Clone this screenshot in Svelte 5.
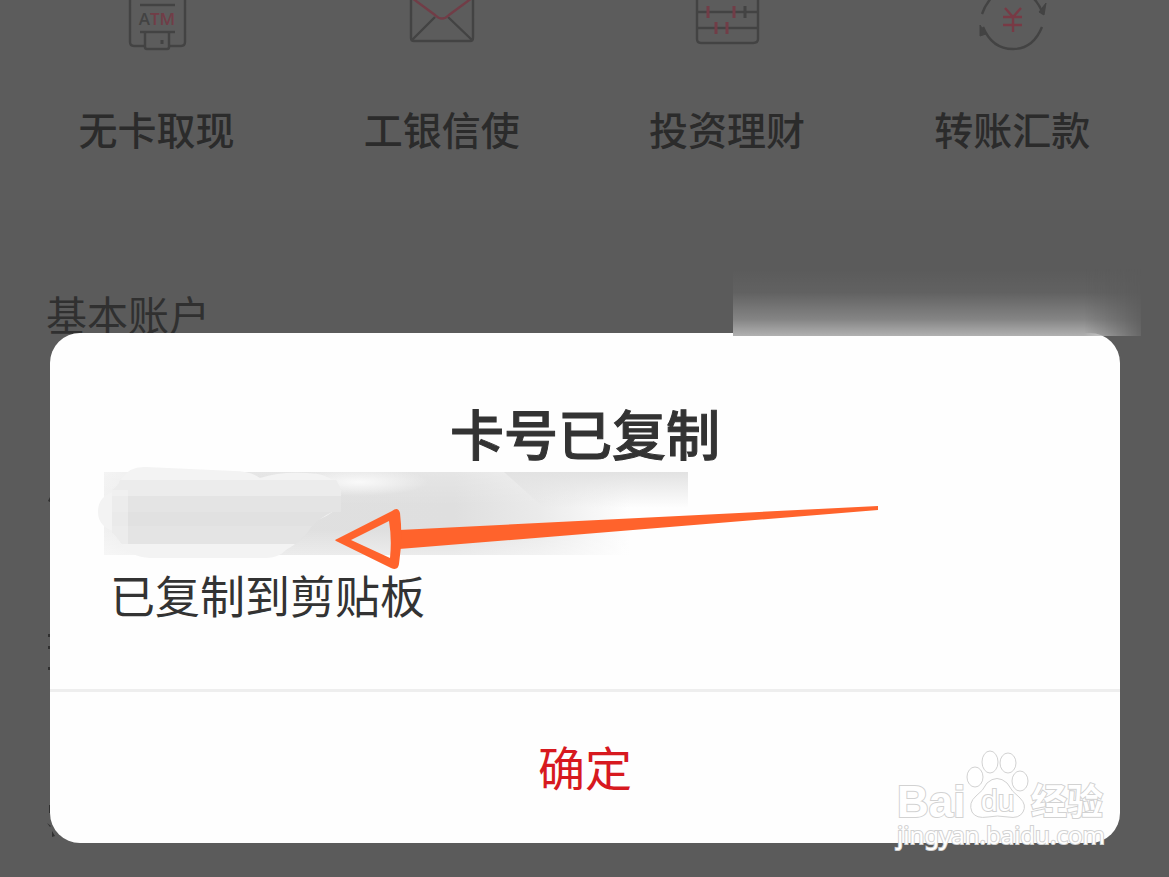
<script>
	let open = true
	const services = [
		{ id: 'atm', name: '无卡取现' },
		{ id: 'mail', name: '工银信使' },
		{ id: 'abacus', name: '投资理财' },
		{ id: 'transfer', name: '转账汇款' }
	]
	const close = () => {
		open = false
	}
</script>

<main>
	<nav class="services">
		{#each services as s}
			<a class="service" href="#{s.id}">
				<svg class="icon" width="72" height="52" viewBox="0 0 72 52" fill="none" stroke="#434343" stroke-width="2.4" aria-hidden="true">
					{#if s.id === 'atm'}
						<path d="M9 -6V42Q9 46 13 46H23M49 46H60Q64 46 64 42V-6M19 5H54M19 32H54" />
						<path d="M24 32V47Q24 49 26 49H46Q48 49 48 47V32" />
						<path d="M41 40V44" stroke-width="3" />
						<text x="36" y="25" text-anchor="middle" class="atm"><tspan>A</tspan><tspan class="red">TM</tspan></text>
					{:else if s.id === 'mail'}
						<path d="M5 -4V38Q5 41 8 41H64Q67 41 67 38V-4M6 40L29 17M66 40L42 17" />
						<path d="M6 -2L29 15Q36 22 43 15L66 -2" stroke="#713d47" />
					{:else if s.id === 'abacus'}
						<path d="M6 -6V39Q6 43 10 43H62Q67 43 67 39V-6M6 12H66M6 28H66" />
						<path d="M17 6V18M43 6V18M25 22V34M36 22V34" stroke="#713d47" stroke-width="3" />
						<path d="M54 6V18" stroke-width="3" />
					{:else}
						<path d="M6 14Q9 5 16 -3M56 -3Q63 3 67 14M7 27Q16 49 37 49Q57 49 66 27" />
						<path d="M4 25V36L10 34ZM70 3L68 15L63 12Z" fill="#434343" stroke-width="1" />
						<path d="M29 8L37 17L45 8M27 17H46M27 25H46M37 17V32" stroke="#783a45" />
					{/if}
				</svg>
				<span>{s.name}</span>
			</a>
		{/each}
	</nav>

	<section class="account">
		<h2>基本账户</h2>
	</section>
</main>

{#if open}
	<div class="overlay">
		<div class="dialog" role="dialog" aria-modal="true" aria-labelledby="title">
			<div class="strip"></div>
			<div class="body">
				<h1 id="title">卡号已复制</h1>
				<!-- masked card number -->
				<svg class="masked" width="584" height="83" viewBox="0 0 584 83" aria-hidden="true">
					<defs>
						<linearGradient id="across">
							<stop offset="0" stop-color="#f1f1f1" />
							<stop offset=".2" stop-color="#e0e0e0" />
							<stop offset=".6" stop-color="#dfdfdf" />
							<stop offset=".75" stop-color="#ebebeb" />
							<stop offset=".9" stop-color="#fefefe" />
						</linearGradient>
						<linearGradient id="top" x2="0" y2="1">
							<stop offset="0" stop-color="#e2e2e2" />
							<stop offset="1" stop-color="#e2e2e2" stop-opacity="0" />
						</linearGradient>
						<linearGradient id="light" x2="0" y2="1">
							<stop offset="0" stop-color="#fff" stop-opacity=".2" />
							<stop offset=".4" stop-color="#fff" stop-opacity="0" />
							<stop offset=".7" stop-color="#fff" stop-opacity="0" />
							<stop offset="1" stop-color="#fff" stop-opacity=".4" />
						</linearGradient>
						<radialGradient id="spot">
							<stop offset="0" stop-color="#fff" stop-opacity=".8" />
							<stop offset="1" stop-color="#fff" stop-opacity="0" />
						</radialGradient>
					</defs>
					<rect width="584" height="83" fill="url(#across)" />
					<rect width="584" height="83" fill="url(#light)" />
					<path d="M400 0H584V36H440Z" fill="url(#top)" />
					<ellipse cx="255" cy="10" rx="70" ry="14" fill="url(#spot)" />
					<path d="M18 6Q26 -6 42 -5L130 -1Q146 -1 156 6Q180 -2 214 2Q238 8 237 24Q238 40 208 50Q200 68 182 78Q174 86 162 86H46Q26 85 18 72L12 60Q-6 55 -6 40Q-6 24 10 20Z" fill="#f3f3f3" />
					<path d="M16 8H232Q238 16 237 24H8V18Q14 14 16 8Z" fill="#ececec" />
					<path d="M8 24H237V40H8Z" fill="#e4e4e4" />
					<path d="M8 40H228Q216 46 208 54H8Z" fill="#e1e1e1" />
					<path d="M8 54H208Q202 64 192 72H18Q12 64 8 60Z" fill="#e4e4e4" />
					<path d="M8 18H24V72H18L8 60Z" fill="#f3f3f3" opacity=".5" />
				</svg>
				<p>已复制到剪贴板</p>
			</div>
			<button on:click={close}>确定</button>
			<svg class="arrow" width="546" height="68" viewBox="0 0 546 68" aria-hidden="true">
				<path d="M65 26L544 2V6L65 45Z" fill="#ff632c" />
				<path fill-rule="evenodd" d="M1 36L58 7Q64 2 66 9Q69 34 65 60Q64 67 57 64L2 37ZM17 36L56 54Q58 35 55 17Z" fill="#ff632c" />
			</svg>
			<!-- rows behind the dialog that reach past its edges -->
			<svg class="specks" width="1074" height="344" viewBox="0 0 1074 344" fill="#303030" aria-hidden="true">
				<path d="M3 0V5L1 4ZM1 137H3V140H1ZM1 149H3V152H1ZM1 170H3V173H1ZM2 308H3V316H2ZM0 326L4 329L3 330ZM5 334L8 339L5 340Z" />
			</svg>
		</div>
	</div>
{/if}

<svg class="watermark" width="216" height="104" viewBox="0 0 216 104" aria-label="Baidu 经验">
	<g fill="#fff" stroke="#d2d2d2" stroke-width="1">
		<ellipse cx="82" cy="27" rx="8" ry="10" />
		<ellipse cx="97" cy="12" rx="8" ry="11" />
		<ellipse cx="115" cy="13" rx="8" ry="10" />
		<ellipse cx="127" cy="31" rx="8" ry="10" />
		<path d="M94 33Q104 24 114 33Q119 42 127 48Q134 55 130 62Q126 69 115 67Q104 65 95 67Q83 69 79 62Q75 53 83 46Q90 41 94 33Z" />
		<text x="4" y="67" class="bai">Bai</text>
		<text x="88" y="61" class="du">du</text>
		<text x="138" y="65" class="jy">经验</text>
		<text x="4" y="94" class="url">jingyan.baidu.com</text>
	</g>
</svg>

<style>
	:global(body) {
		margin: 0;
		background: #5b5b5b;
		font-family: "Noto Sans CJK SC", sans-serif;
	}
	main {
		min-height: 100vh;
	}
	.services {
		display: grid;
		grid-template-columns: repeat(4, 1fr);
		padding: 0 14px 52px;
		background: #5c5c5c;
	}
	.service {
		display: flex;
		flex-direction: column;
		align-items: center;
		gap: 46px;
		color: #2b2b2b;
		font-size: 39px;
		line-height: 60px;
		font-weight: 500;
		text-decoration: none;
	}
	.icon {
		display: block;
	}
	.atm {
		fill: #434343;
		stroke: none;
		font: 600 17px "Open Sans", sans-serif;
	}
	.red {
		fill: #713d47;
	}
	.account {
		padding: 73px 46px 0;
	}
	h2 {
		margin: 0;
		color: #303030;
		font-size: 41px;
		line-height: 60px;
		font-weight: 400;
	}
	.overlay {
		position: absolute;
		inset: 0;
		display: flex;
		align-items: flex-end;
		padding: 0 49px 34px 50px;
	}
	.dialog {
		position: relative;
		flex: 1;
		background: #fefefe;
		border-radius: 30px;
	}
	/* smudge above the top right corner */
	.strip {
		position: absolute;
		top: -64px;
		right: -21px;
		width: 408px;
		height: 67px;
		background: linear-gradient(transparent, rgba(255, 255, 255, 0.04) 35%, rgba(255, 255, 255, 0.25) 75%, rgba(255, 255, 255, 0.52)), #5b5b5b;
		-webkit-mask-image: linear-gradient(to right, black 86%, rgba(0, 0, 0, 0.15));
		mask-image: linear-gradient(to right, black 86%, rgba(0, 0, 0, 0.15));
	}
	.body {
		padding: 65px 54px 64px;
		border-bottom: 3px solid #eee;
	}
	h1 {
		margin: 0 0 4px;
		color: #333;
		font-size: 54px;
		line-height: 70px;
		font-weight: 500;
		text-align: center;
		-webkit-text-stroke: 1px #333;
	}
	.masked {
		display: block;
		overflow: visible;
	}
	p {
		margin: 10px 0 0 6px;
		color: #333;
		font-size: 45px;
		line-height: 60px;
	}
	button {
		display: block;
		width: 100%;
		height: 151px;
		padding: 0 0 4px;
		border: 0;
		background: none;
		color: #d7191f;
		font-family: inherit;
		font-size: 47px;
	}
	.arrow {
		position: absolute;
		top: 171px;
		left: 284px;
	}
	.specks {
		position: absolute;
		left: -3px;
		bottom: 2px;
	}
	.watermark {
		position: absolute;
		right: 60px;
		bottom: 23px;
	}
	.watermark text {
		paint-order: stroke;
		stroke-width: 2px;
	}
	.bai {
		font: 700 44px "Liberation Sans", sans-serif;
	}
	.du {
		font: 400 30px "Liberation Sans", sans-serif;
	}
	.jy {
		font: 700 36px "Noto Sans CJK SC", sans-serif;
	}
	.url {
		font: 400 24px "Noto Sans", sans-serif;
	}
</style>
